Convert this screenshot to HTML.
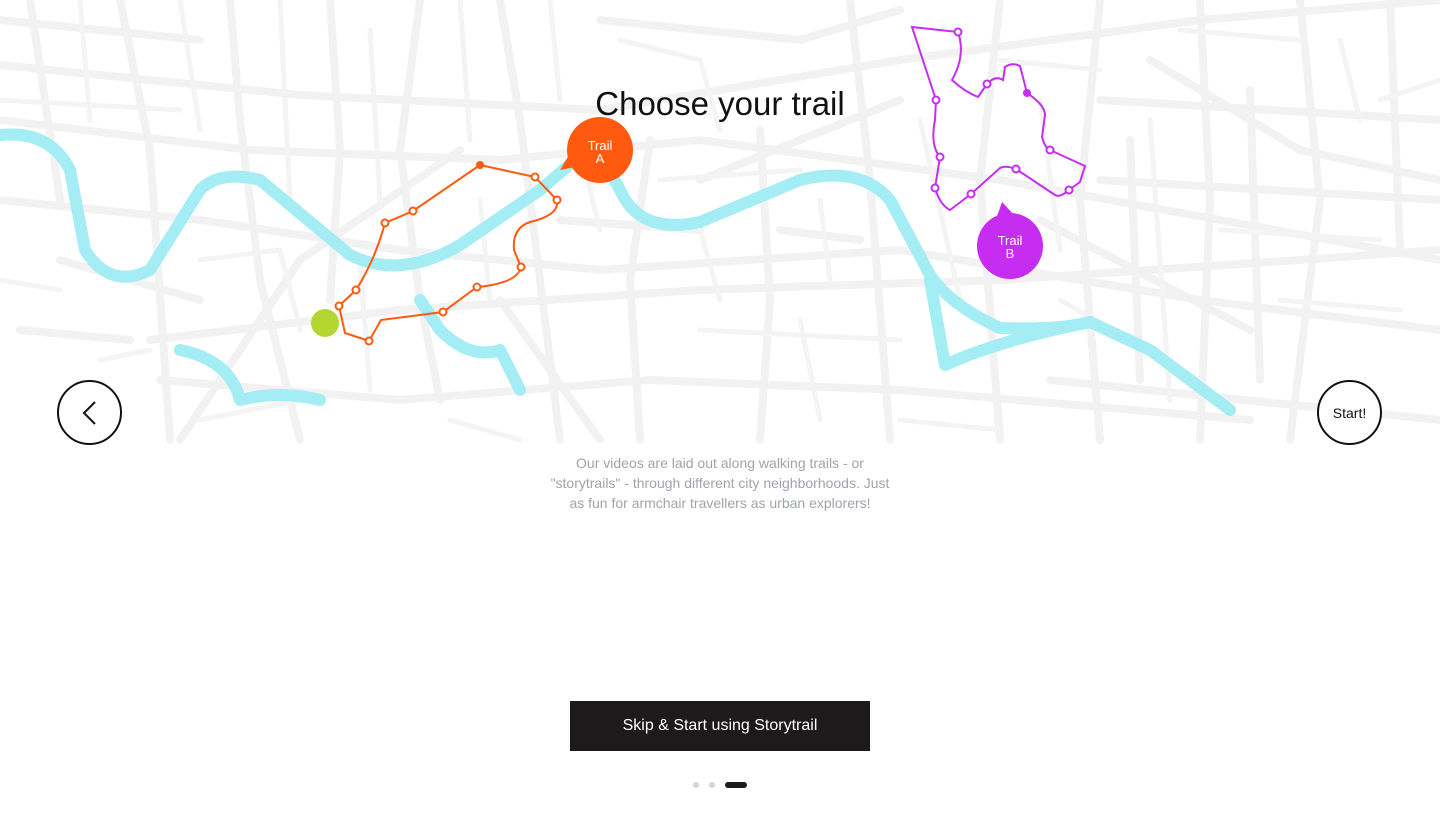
<!DOCTYPE html>
<html><head><meta charset="utf-8"><style>
body{margin:0;width:1440px;height:825px;overflow:hidden;background:#fff;font-family:"Liberation Sans",sans-serif;position:relative}
svg{position:absolute;left:0;top:0}
h1{position:absolute;left:0;width:1440px;top:85px;margin:0;text-align:center;font-weight:400;font-size:33px;color:#111}
.nav{position:absolute;top:380px;width:65px;height:65px;border:2px solid #111;border-radius:50%;box-sizing:border-box;display:flex;align-items:center;justify-content:center;font-size:14px;color:#111;background:#fff}
p{position:absolute;left:470px;width:500px;top:453px;margin:0;text-align:center;font-size:14px;line-height:20px;color:#a0a4aa}
.btn{position:absolute;left:570px;top:701px;width:300px;height:50px;background:#1c1a1a;color:#fff;font-size:16px;display:flex;align-items:center;justify-content:center}
.dot{position:absolute;top:782px;width:6px;height:6px;border-radius:3px;background:#d5d5d5}
</style></head><body>
<svg width="1440" height="450" viewBox="0 0 1440 450">
<g stroke="#f2f2f2" stroke-width="8" fill="none" stroke-linecap="round">
<path d="M0 65 L300 95 L600 110 L900 60 L1200 20 L1440 0"/>
<path d="M0 120 L250 150 L500 160 L700 140 L1000 180 L1440 260"/>
<path d="M0 200 L200 220 L400 250 L600 270 L900 250 L1200 300 L1440 330"/>
<path d="M150 340 L400 310 L700 290 L1000 280 L1300 260 L1440 250"/>
<path d="M160 380 L400 400 L650 380 L900 390 L1250 420"/>
<path d="M30 0 L60 200 M120 0 L150 150 L170 440 M230 0 L240 120 L260 280 L300 440"/>
<path d="M330 0 L340 150 L330 300 M420 0 L400 150 L420 300 L440 400 M500 0 L520 120 L560 440"/>
<path d="M650 140 L630 280 L640 440 M760 130 L770 300 L760 440 M850 0 L870 180 L890 440"/>
<path d="M1000 0 L980 180 L1000 440 M1100 0 L1080 200 L1100 440 M1200 0 L1210 200 L1200 440 M1300 0 L1320 200 L1290 440 M1390 0 L1400 250"/>
<path d="M0 20 L200 40 M600 20 L800 40 L900 10 M1100 100 L1440 120 M1100 180 L1440 200 M1050 380 L1440 420"/>
<path d="M180 440 L300 260 L460 150 M500 300 L600 440 M700 180 L900 100 M1040 220 L1250 330 M1150 60 L1300 150 L1440 180"/>
<path d="M60 260 L200 300 M20 330 L130 340 M560 220 L700 230 M780 230 L860 240 M1130 140 L1140 380 M1250 90 L1260 380"/>
</g>
<g stroke="#f4f4f4" stroke-width="5" fill="none" stroke-linecap="round">
<path d="M0 100 L180 110 M80 0 L90 120 M180 0 L200 130 M280 0 L290 200 M370 30 L380 200 M460 0 L470 140 M550 0 L560 100 M620 40 L700 60 M700 60 L720 130"/>
<path d="M200 260 L280 250 M280 250 L300 330 M360 260 L370 390 M480 200 L490 300 M580 150 L600 230 M660 180 L800 170 M700 230 L720 300 M820 200 L830 280 M800 320 L820 420 M700 330 L900 340"/>
<path d="M920 120 L960 300 M1040 100 L1060 250 M1150 120 L1170 400 M1220 230 L1380 240 M1280 300 L1400 310 M1340 40 L1360 120 M1380 100 L1440 80 M1060 300 L1200 380 M1000 60 L1100 70 M1180 30 L1300 40"/>
<path d="M0 280 L60 290 M100 360 L150 350 M200 420 L300 400 M450 420 L520 440 M900 420 L1000 430"/>
</g>
<g stroke="#a4edf4" stroke-width="12" fill="none" stroke-linecap="round" stroke-linejoin="round">
<path d="M0 135 Q50 130 70 170 L85 250 Q110 290 150 270 L200 190 Q220 170 260 180 L350 255 Q400 280 460 245 L540 190 L575 160 Q600 150 620 190 Q640 235 700 222 L800 180 Q860 165 890 200 L930 275 Q950 305 1000 328 Q1060 330 1090 322 L1150 350 L1230 410"/>
<path d="M930 280 L945 365 Q1000 340 1090 322"/>
<path d="M420 300 L440 330 Q470 360 500 350 L520 390 M180 350 Q230 360 240 400 Q280 390 320 400"/>
</g>
<g fill="none" stroke="#ff5a10" stroke-width="2">
<path d="M480 165 L535 177 L557 200 Q560 215 530 222 Q512 228 514 250 L521 267 Q518 283 477 287 L443 312 L381 320 L369 341 L345 333 L339 306 L356 290 Q375 260 385 223 L413 211 Z"/>
</g>
<g fill="#fff" stroke="#ff5a10" stroke-width="2">
<circle cx="535" cy="177" r="3.5"/><circle cx="557" cy="200" r="3.5"/><circle cx="521" cy="267" r="3.5"/><circle cx="477" cy="287" r="3.5"/><circle cx="443" cy="312" r="3.5"/><circle cx="369" cy="341" r="3.5"/><circle cx="339" cy="306" r="3.5"/><circle cx="356" cy="290" r="3.5"/><circle cx="385" cy="223" r="3.5"/><circle cx="413" cy="211" r="3.5"/>
</g>
<circle cx="480" cy="165" r="4" fill="#ff5a10"/>
<circle cx="325" cy="323" r="14" fill="#b3d633"/>
<path d="M912 27 L958 32 Q966 55 952 80 Q965 92 978 97 L987 84 Q995 75 1003 80 L1005 67 Q1012 62 1020 66 L1027 93 Q1045 105 1045 115 L1042 137 Q1045 148 1050 150 L1085 166 L1080 182 L1069 190 Q1060 198 1055 195 L1016 169 Q1005 165 1000 168 L971 194 L950 210 Q940 205 935 188 L940 157 Q930 145 935 120 L936 100 Z" fill="none" stroke="#c72df0" stroke-width="2"/>
<g fill="#fff" stroke="#c72df0" stroke-width="2">
<circle cx="958" cy="32" r="3.5"/><circle cx="987" cy="84" r="3.5"/><circle cx="1050" cy="150" r="3.5"/><circle cx="1069" cy="190" r="3.5"/><circle cx="1016" cy="169" r="3.5"/><circle cx="971" cy="194" r="3.5"/><circle cx="935" cy="188" r="3.5"/><circle cx="940" cy="157" r="3.5"/><circle cx="936" cy="100" r="3.5"/>
</g>
<circle cx="1027" cy="93" r="4" fill="#c72df0"/>
<circle cx="600" cy="150" r="33" fill="#ff5a10"/><path d="M575 145 L560 170 L585 165 Z" fill="#ff5a10"/>
<text x="600" y="150" font-size="13" fill="#fff" text-anchor="middle" font-family="Liberation Sans">Trail</text>
<text x="600" y="163" font-size="13" fill="#fff" text-anchor="middle" font-family="Liberation Sans">A</text>
<circle cx="1010" cy="246" r="33" fill="#c72df0"/><path d="M1002 202 L995 222 L1015 216 Z" fill="#c72df0"/>
<text x="1010" y="245" font-size="13" fill="#fff" text-anchor="middle" font-family="Liberation Sans">Trail</text>
<text x="1010" y="258" font-size="13" fill="#fff" text-anchor="middle" font-family="Liberation Sans">B</text>
</svg>
<h1>Choose your trail</h1>
<div class="nav" style="left:57px"><svg width="20" height="26" viewBox="0 0 20 26" style="position:static"><path d="M15 2 L4 13 L15 24" fill="none" stroke="#111" stroke-width="2"/></svg></div>
<div class="nav" style="left:1317px">Start!</div>
<p>Our videos are laid out along walking trails - or<br>"storytrails" - through different city neighborhoods. Just<br>as fun for armchair travellers as urban explorers!</p>
<div class="btn">Skip &amp; Start using Storytrail</div>
<div class="dot" style="left:693px"></div><div class="dot" style="left:709px"></div>
<div class="dot" style="left:725px;width:22px;background:#1c1a1a"></div>
</body></html>
